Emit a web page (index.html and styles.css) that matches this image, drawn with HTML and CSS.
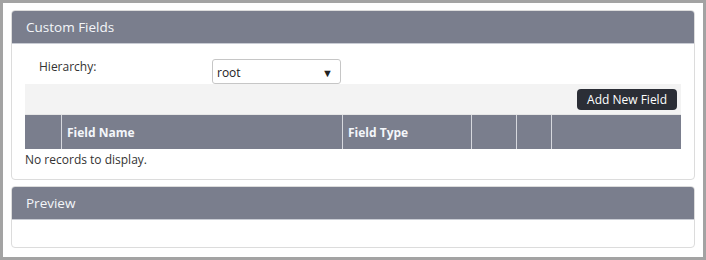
FILE: index.html
```html
<!DOCTYPE html>
<html>
<head>
    <title>Custom Fields</title>
    <link rel="stylesheet" href="styles.css">
</head>
<body>
    <div class="frame">
        <div class="panel">
            <div class="panel-header">Custom Fields</div>
            <div class="panel-body">
                <div class="hierarchy-row">
                    <label class="hierarchy-label">Hierarchy:</label>
                    <div class="select-box">
                        <span>root</span>
                        <span class="arrow">&#9660;</span>
                    </div>
                </div>

                <div class="toolbar">
                    <button class="add-btn">Add New Field</button>
                </div>

                <table class="grid">
                    <thead>
                        <tr>
                            <th class="col-select"></th>
                            <th class="col-name">Field Name</th>
                            <th class="col-type">Field Type</th>
                            <th class="col-a"></th>
                            <th class="col-b"></th>
                            <th></th>
                        </tr>
                    </thead>
                </table>
                <div class="no-records">No records to display.</div>
            </div>
        </div>

        <div class="panel preview">
            <div class="panel-header">Preview</div>
            <div class="panel-body preview-body"></div>
        </div>
    </div>
</body>
</html>
```

FILE: styles.css
```css
body {
    margin: 0;
    font-family: "Open Sans", Arial, sans-serif;
    font-size: 12px;
    color: #333;
}

.frame {
    width: 706px;
    height: 260px;
    box-sizing: border-box;
    border: 3px solid #a3a3a3;
    background: white;
    padding: 7px 8px;
}

.panel {
    border: 1px solid #dcdcdc;
    border-radius: 4px;
    overflow: hidden;
    background: white;
}

.panel-header {
    background: #7a7e8d;
    color: #f4f6fa;
    font-size: 13.5px;
    height: 33px;
    line-height: 32px;
    padding-left: 14px;
    border-bottom: 1px solid #c9ccd4;
    box-sizing: border-box;
}

.panel-body {
    padding: 0 13px 11px;
}

.hierarchy-row {
    display: flex;
    align-items: flex-start;
    padding-top: 15px;
}

.hierarchy-label {
    width: 187px;
    padding: 0 0 0 14px;
    margin-top: -1px;
    box-sizing: border-box;
}

.select-box {
    width: 129px;
    height: 25px;
    box-sizing: border-box;
    border: 1px solid #c6c6c6;
    border-radius: 3px;
    display: flex;
    justify-content: space-between;
    align-items: center;
    padding: 2px 7px 0 4px;
    color: #222;
}

.arrow {
    font-size: 11px;
    color: #222;
}

.toolbar {
    background: #f3f3f3;
    height: 30px;
    display: flex;
    justify-content: flex-end;
    align-items: center;
    padding-right: 4px;
    border-bottom: 1px solid #e6e6e6;
}

.add-btn {
    background: #2b2e36;
    color: white;
    border: none;
    border-radius: 4px;
    height: 21px;
    padding: 0 10px;
    font-family: "Open Sans", Arial, sans-serif;
    font-size: 12px;
    margin-top: 1px;
}

.grid {
    width: 100%;
    border-collapse: collapse;
}

.grid th {
    background: #7a7e8d;
    color: #f4f6fa;
    height: 34px;
    text-align: left;
    font-weight: bold;
    padding: 0 5px;
    border-left: 1px solid #d6d8de;
}

.grid th:first-child {
    border-left: none;
}

.col-select { width: 26px; }
.col-name { width: 270px; }
.col-type { width: 118px; }
.col-a { width: 34px; }
.col-b { width: 24px; }

.no-records {
    padding-top: 2px;
}

.preview {
    margin-top: 6px;
}

.preview-body {
    height: 27px;
    padding: 0;
}
```
